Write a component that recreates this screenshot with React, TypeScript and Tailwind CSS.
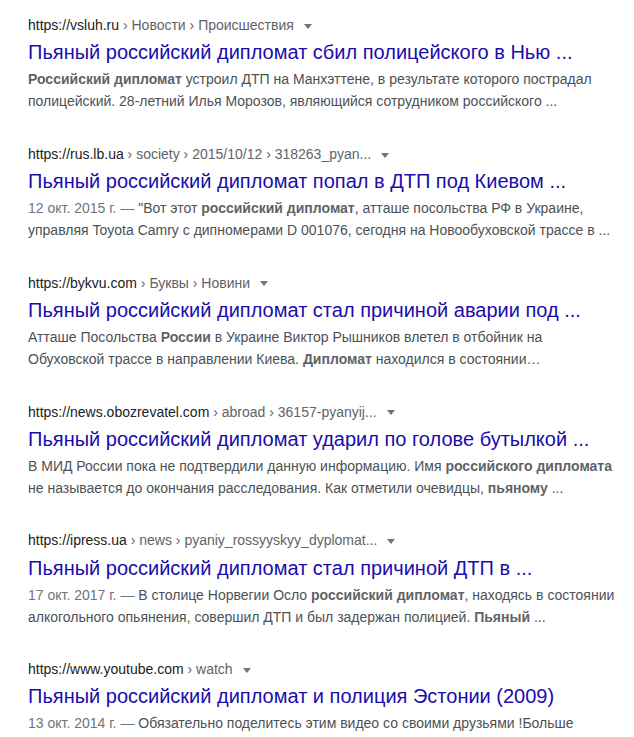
import React from 'react';

type Part = { t: string; b?: boolean };

type Result = {
  host: string;
  crumbs: string;
  title: string;
  date?: string;
  lines: Part[][];
};

const results: Result[] = [
  {
    host: 'https://vsluh.ru',
    crumbs: ' › Новости › Происшествия',
    title: 'Пьяный российский дипломат сбил полицейского в Нью ...',
    lines: [
      [{ t: 'Российский дипломат', b: true }, { t: ' устроил ДТП на Манхэттене, в результате которого пострадал' }],
      [{ t: 'полицейский. 28-летний Илья Морозов, являющийся сотрудником российского ...' }],
    ],
  },
  {
    host: 'https://rus.lb.ua',
    crumbs: ' › society › 2015/10/12 › 318263_pyan...',
    title: 'Пьяный российский дипломат попал в ДТП под Киевом ...',
    date: '12 окт. 2015 г. — ',
    lines: [
      [{ t: '"Вот этот ' }, { t: 'российский дипломат', b: true }, { t: ', атташе посольства РФ в Украине,' }],
      [{ t: 'управляя Toyota Camry с дипномерами D 001076, сегодня на Новообуховской трассе в ...' }],
    ],
  },
  {
    host: 'https://bykvu.com',
    crumbs: ' › Буквы › Новини',
    title: 'Пьяный российский дипломат стал причиной аварии под ...',
    lines: [
      [{ t: 'Атташе Посольства ' }, { t: 'России', b: true }, { t: ' в Украине Виктор Рышников влетел в отбойник на' }],
      [{ t: 'Обуховской трассе в направлении Киева. ' }, { t: 'Дипломат', b: true }, { t: ' находился в состоянии…' }],
    ],
  },
  {
    host: 'https://news.obozrevatel.com',
    crumbs: ' › abroad › 36157-pyanyij...',
    title: 'Пьяный российский дипломат ударил по голове бутылкой ...',
    lines: [
      [{ t: 'В МИД России пока не подтвердили данную информацию. Имя ' }, { t: 'российского дипломата', b: true }],
      [{ t: 'не называется до окончания расследования. Как отметили очевидцы, ' }, { t: 'пьяному', b: true }, { t: ' ...' }],
    ],
  },
  {
    host: 'https://ipress.ua',
    crumbs: ' › news › pyaniy_rossyyskyy_dyplomat...',
    title: 'Пьяный российский дипломат стал причиной ДТП в ...',
    date: '17 окт. 2017 г. — ',
    lines: [
      [{ t: 'В столице Норвегии Осло ' }, { t: 'российский дипломат', b: true }, { t: ', находясь в состоянии' }],
      [{ t: 'алкогольного опьянения, совершил ДТП и был задержан полицией. ' }, { t: 'Пьяный', b: true }, { t: ' ...' }],
    ],
  },
  {
    host: 'https://www.youtube.com',
    crumbs: ' › watch',
    title: 'Пьяный российский дипломат и полиция Эстонии (2009)',
    date: '13 окт. 2014 г. — ',
    lines: [[{ t: 'Обязательно поделитесь этим видео со своими друзьями !Больше' }]],
  },
];

function Caret() {
  return (
    <svg className="ml-[10px] inline-block align-middle" width="8" height="5" viewBox="0 0 8 5">
      <path d="M0 0h8L4 5z" fill="#70757a" />
    </svg>
  );
}

function ResultBlock({ r }: { r: Result }) {
  return (
    <div className="mb-[32.4px]">
      <div className="whitespace-pre text-[14px] leading-[18.2px]">
        <span className="text-[#202124]">{r.host}</span>
        <span className="text-[#5f6368]">{r.crumbs}</span>
        <Caret />
      </div>
      <h3 className="pt-[5px] mb-[3px] whitespace-nowrap text-[20px] leading-[26px] text-[#1a0dab]">{r.title}</h3>
      <div className="text-[14px] leading-[22.12px] text-[#4d5156]">
        {r.lines.map((line, i) => (
          <div key={i} className="whitespace-pre">
            {i === 0 && r.date && <span className="text-[#70757a]">{r.date}</span>}
            {line.map((p, j) =>
              p.b ? (
                <b key={j} className="font-bold text-[#5f6368]">{p.t}</b>
              ) : (
                <span key={j}>{p.t}</span>
              )
            )}
          </div>
        ))}
      </div>
    </div>
  );
}

export default function App() {
  return (
    <div
      className="w-[634px] h-[737px] overflow-hidden bg-white pl-[28px] pt-[16px]"
      style={{ fontFamily: '"Liberation Sans", Arial, sans-serif' }}
    >
      {results.map((r, i) => (
        <ResultBlock key={i} r={r} />
      ))}
    </div>
  );
}
